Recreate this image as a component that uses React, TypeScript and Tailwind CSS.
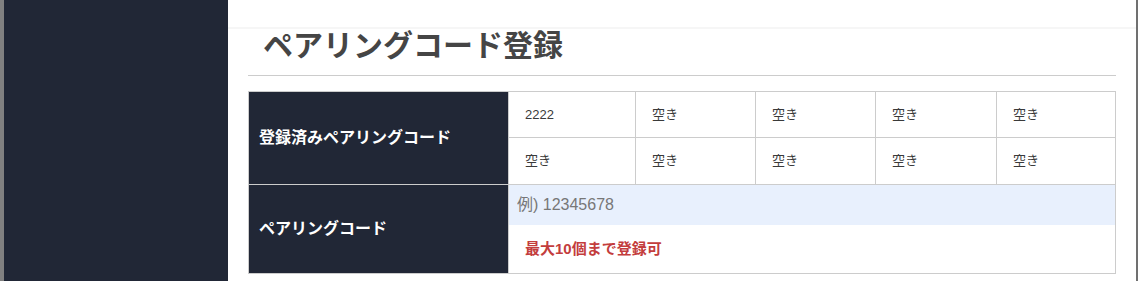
import React from 'react'

const codes = ['2222', '空き', '空き', '空き', '空き', '空き', '空き', '空き', '空き', '空き']

export default function App() {
  return (
    <div
      className="flex h-[281px] w-full overflow-hidden bg-white"
      style={{ fontFamily: '"Liberation Sans", "Noto Sans CJK JP", sans-serif' }}
    >
      {/* left edge + sidebar */}
      <div className="w-[4px] shrink-0 bg-[#808080]" />
      <div className="w-[224px] shrink-0 bg-[#212736]" />

      {/* main */}
      <div className="flex min-w-0 flex-1 flex-col">
        <div className="h-[27px] shrink-0 bg-white" />
        <div className="h-[2px] shrink-0 bg-[#f6f6f6]" />

        <div className="px-[20px]">
          <h1 className="border-b border-[#cccccc] pb-[12px] pl-[15px] text-[30px] font-bold leading-[34px] text-[#454545]">
            ペアリングコード登録
          </h1>

          <div className="mt-[15px] border border-[#cccccc]">
            {/* registered codes */}
            <div className="flex">
              <div className="flex w-[259px] shrink-0 items-center bg-[#212736] pl-[10px] text-[16px] font-bold leading-[20px] text-white">
                登録済みペアリングコード
              </div>
              <div className="grid flex-1 grid-cols-[126px_120px_120px_121px_1fr] border-l border-[#cccccc]">
                {codes.map((c, i) => (
                  <div
                    key={i}
                    className={`flex items-center pl-[16px] text-[13px] leading-[16px] text-[#3a3a3a] ${
                      i % 5 !== 0 ? 'border-l border-[#cccccc]' : ''
                    } ${i < 5 ? 'h-[46px] border-b border-[#cccccc]' : 'h-[46px]'}`}
                  >
                    {c}
                  </div>
                ))}
              </div>
            </div>

            {/* pairing code input */}
            <div className="flex border-t border-[#cccccc]">
              <div className="flex w-[259px] shrink-0 items-center bg-[#212736] pl-[10px] text-[16px] font-bold leading-[20px] text-white">
                ペアリングコード
              </div>
              <div className="flex flex-1 flex-col border-l border-[#cccccc]">
                <input
                  type="text"
                  placeholder="例) 12345678"
                  className="h-[40px] w-full bg-[#e8f0fd] pl-[8px] text-[16px] text-[#333333] outline-none placeholder:text-[#777777]"
                />
                <div className="flex h-[48px] items-center pl-[16px] text-[15px] font-bold text-[#c33d3d]">
                  最大10個まで登録可
                </div>
              </div>
            </div>
          </div>
        </div>
      </div>

      {/* right edge */}
      <div className="w-[2px] shrink-0 bg-[#707070]" />
    </div>
  )
}
